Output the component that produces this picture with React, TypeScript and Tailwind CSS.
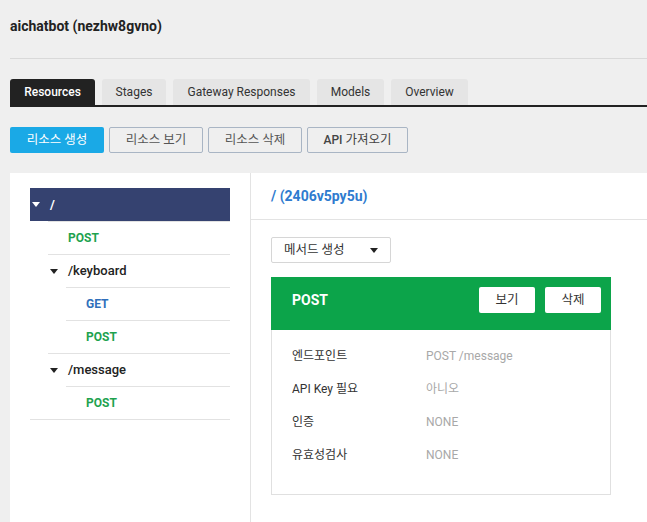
import React from "react"

const font = "font-['Roboto','Noto_Sans_CJK_KR',sans-serif]"

function Caret({ color = "#222" }: { color?: string }) {
  return (
    <svg width="8" height="5" viewBox="0 0 8 5" className="shrink-0">
      <polygon points="0,0 8,0 4,5" fill={color} />
    </svg>
  )
}

const tabs = [
  { label: "Resources", w: "w-[85px]", active: true },
  { label: "Stages", w: "w-[64px]" },
  { label: "Gateway Responses", w: "w-[137px]" },
  { label: "Models", w: "w-[67px]" },
  { label: "Overview", w: "w-[77px]" },
]

function MethodRow({ method, indent }: { method: "GET" | "POST"; indent: string }) {
  const color = method === "GET" ? "text-[#2f6fbb]" : "text-[#1ea24f]"
  return (
    <div className={`${indent} h-[33px] border-t border-[#e2e2e2] flex items-center pl-[20px]`}>
      <span className={`text-[12px] font-bold ${color}`}>{method}</span>
    </div>
  )
}

function PathRow({ path }: { path: string }) {
  return (
    <div className="ml-[18px] h-[33px] border-t border-[#e2e2e2] flex items-center pl-[2px]">
      <Caret />
      <span className="ml-[10px] text-[13px] font-medium text-[#222]">{path}</span>
    </div>
  )
}

const details = [
  { label: "엔드포인트", value: "POST /message" },
  { label: "API Key 필요", value: "아니오" },
  { label: "인증", value: "NONE" },
  { label: "유효성검사", value: "NONE" },
]

export default function App() {
  return (
    <div className={`min-h-[522px] bg-[#efefef] text-[#333] ${font}`}>
      <div className="pl-[10px]">
        <div className="h-[59px] border-b border-[#d9d9d9] pt-[17px]">
          <h1 className="text-[14px] leading-[18px] font-bold text-[#222]">aichatbot (nezhw8gvno)</h1>
        </div>

        <div className="mt-[20px] flex gap-[7px] border-b-2 border-[#222]">
          {tabs.map((t) => (
            <div
              key={t.label}
              className={`${t.w} h-[26px] rounded-t-[3px] flex items-center justify-center text-[12px] ${
                t.active ? "bg-[#222] text-white font-medium" : "bg-[#e5e5e5] text-[#333]"
              }`}
            >
              {t.label}
            </div>
          ))}
        </div>

        <div className="mt-[20px] flex gap-[5px] text-[12.5px]">
          <button className="w-[94px] h-[26px] rounded-[2px] bg-[#1aa9e6] text-white">리소스 생성</button>
          <button className="w-[94px] h-[26px] rounded-[2px] border border-[#a9b5c4] text-[#555]">리소스 보기</button>
          <button className="w-[94px] h-[26px] rounded-[2px] border border-[#a9b5c4] text-[#555]">리소스 삭제</button>
          <button className="w-[101px] h-[26px] rounded-[2px] border border-[#a9b5c4] text-[#444]">
            <span className="font-medium text-[12px]">API</span> 가져오기
          </button>
        </div>

        <div className="mt-[20px] bg-white flex min-h-[349px]">
          <div className="w-[241px] shrink-0 border-r border-[#e3e3e3] pt-[15px] pl-[20px]">
            <div className="w-[200px]">
              <div className="h-[33px] bg-[#354270] flex items-center pl-[2px]">
                <Caret color="#fff" />
                <span className="ml-[10px] text-[13px] font-bold text-white">/</span>
              </div>
              <MethodRow method="POST" indent="ml-[18px]" />
              <PathRow path="/keyboard" />
              <MethodRow method="GET" indent="ml-[36px]" />
              <MethodRow method="POST" indent="ml-[36px]" />
              <PathRow path="/message" />
              <MethodRow method="POST" indent="ml-[36px]" />
              <div className="border-t border-[#e2e2e2]" />
            </div>
          </div>

          <div className="flex-1">
            <div className="h-[47px] border-b border-[#e3e3e3] flex items-center pl-[20px]">
              <span className="text-[14px] font-bold text-[#2e7bcf]">/ (2406v5py5u)</span>
            </div>

            <div className="mt-[17px] ml-[20px] w-[120px] h-[26px] border border-[#d6d6d6] rounded-[2px] flex items-center justify-between pl-[12px] pr-[12px]">
              <span className="text-[12.5px] text-[#333]">메서드 생성</span>
              <Caret />
            </div>

            <div className="mt-[14px] ml-[20px] w-[340px]">
              <div className="h-[53px] bg-[#0ca44a] pt-[10px] pl-[21px] pr-[10px] flex items-start justify-between">
                <span className="h-[26px] flex items-center text-[14px] font-bold text-white">POST</span>
                <div className="flex gap-[10px]">
                  <button className="w-[56px] h-[26px] rounded-[2px] bg-white text-[12.5px] text-[#333]">보기</button>
                  <button className="w-[56px] h-[26px] rounded-[2px] bg-white text-[12.5px] text-[#333]">삭제</button>
                </div>
              </div>
              <div className="border-x border-b border-[#e0e0e0] pt-[9px] pb-[23px] pl-[20px]">
                {details.map((d) => (
                  <div key={d.label} className="h-[33px] flex items-center text-[12px]">
                    <span className="w-[134px] text-[#333]">{d.label}</span>
                    <span className="text-[#a8a8a8]">{d.value}</span>
                  </div>
                ))}
              </div>
            </div>
          </div>
        </div>
      </div>
    </div>
  )
}
